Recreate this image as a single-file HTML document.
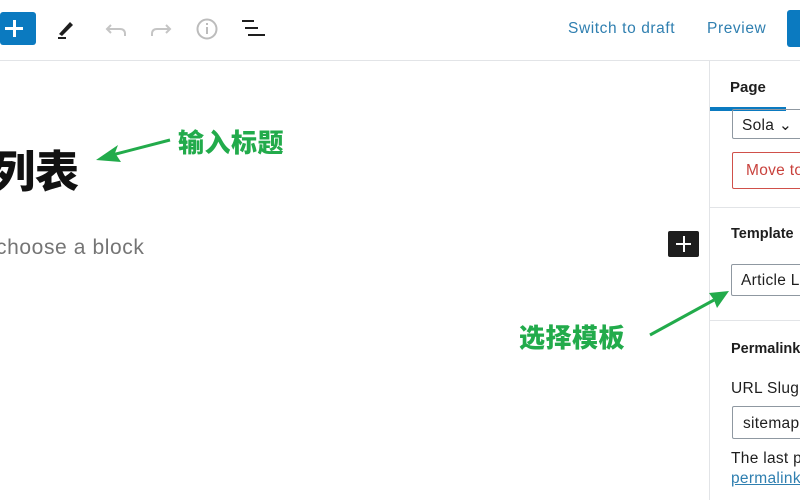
<!DOCTYPE html>
<html><head><meta charset="utf-8"><style>
*{margin:0;padding:0;box-sizing:border-box}
body{width:800px;height:500px;overflow:hidden;background:#fff;font-family:"Liberation Sans","Noto Sans CJK SC",sans-serif;position:relative;color:#1e1e1e}
.a{position:absolute;white-space:nowrap}
.t{font-size:15.5px;color:#1e1e1e;letter-spacing:0.3px}
</style></head><body>
<div class="a" style="left:0;top:0;width:800px;height:61px;border-bottom:1px solid #e2e4e7"></div>
<div class="a" style="left:0;top:12px;width:36px;height:33px;background:#0b7ac0;border-radius:3px"></div>
<div class="a" style="left:5px;top:27px;width:18px;height:3px;background:#fff"></div>
<div class="a" style="left:12.5px;top:20px;width:3px;height:17px;background:#fff"></div>
<svg class="a" style="left:55px;top:16px" width="230" height="26">
<path d="M4 18 L15 6 L18 9 L7 20 Z" fill="#1e1e1e"/><rect x="3" y="21" width="8" height="2" fill="#1e1e1e"/>
<path d="M56 9 L52 13 L56 17 M52 13 H65 Q70 13 70 18 V20" fill="none" stroke="#c5c5c5" stroke-width="2"/>
<path d="M111 9 L115 13 L111 17 M115 13 H102 Q97 13 97 18 V20" fill="none" stroke="#c5c5c5" stroke-width="2"/>
<circle cx="152" cy="13" r="9.5" fill="none" stroke="#bcbcbc" stroke-width="2"/><rect x="151" y="11" width="2" height="7" fill="#bcbcbc"/><rect x="151" y="7" width="2" height="2" fill="#bcbcbc"/>
<rect x="187" y="4" width="12" height="2" fill="#1e1e1e"/><rect x="190" y="11" width="13" height="2" fill="#1e1e1e"/><rect x="193" y="18" width="17" height="2" fill="#1e1e1e"/>
</svg>
<div class="a" style="left:568px;top:20px;font-size:15.5px;letter-spacing:0.6px;color:#2f7fb0">Switch to draft</div>
<div class="a" style="left:707px;top:20px;font-size:15.5px;letter-spacing:0.6px;color:#2f7fb0">Preview</div>
<div class="a" style="left:787px;top:10px;width:20px;height:37px;background:#0b7ac0;border-radius:3px"></div>
<div class="a" style="left:709px;top:61px;width:1px;height:439px;background:#e2e4e7"></div>
<div class="a" style="left:730px;top:79px;font-size:15px;font-weight:bold">Page</div>
<div class="a" style="left:710px;top:107px;width:76px;height:4px;background:#0b7ac0"></div>
<div class="a" style="left:732px;top:109px;width:80px;height:30px;border:1px solid #8f98a1;border-radius:2px"></div>
<div class="a t" style="left:742px;top:116px">Sola ⌄</div>
<div class="a" style="left:732px;top:152px;width:80px;height:37px;border:1px solid #d0504a;border-radius:2px"></div>
<div class="a" style="left:746px;top:162px;font-size:15.5px;letter-spacing:0.3px;color:#c9423d">Move to</div>
<div class="a" style="left:710px;top:207px;width:90px;height:1px;background:#e2e4e7"></div>
<div class="a" style="left:731px;top:226px;font-size:14.5px;font-weight:bold">Template</div>
<div class="a" style="left:731px;top:264px;width:80px;height:32px;border:1px solid #8f98a1;border-radius:2px"></div>
<div class="a t" style="left:741px;top:272px">Article L</div>
<div class="a" style="left:710px;top:320px;width:90px;height:1px;background:#e2e4e7"></div>
<div class="a" style="left:731px;top:341px;font-size:14.5px;font-weight:bold">Permalink</div>
<div class="a t" style="left:731px;top:380px">URL Slug</div>
<div class="a" style="left:732px;top:406px;width:80px;height:33px;border:1px solid #8f98a1;border-radius:2px"></div>
<div class="a t" style="left:743px;top:415px">sitemap</div>
<div class="a t" style="left:731px;top:450px">The last p</div>
<div class="a" style="left:731px;top:470px;font-size:15.5px;letter-spacing:0.3px;color:#2f7fb0;text-decoration:underline">permalink</div>
<div class="a" style="left:-9px;top:140px;font-size:44px;font-weight:900;font-family:'Noto Sans CJK SC',sans-serif;line-height:56px;color:#111">列表</div>
<div class="a" style="left:-4px;top:236px;font-size:21px;letter-spacing:0.6px;color:#757575">choose a block</div>
<div class="a" style="left:668px;top:231px;width:31px;height:26px;background:#1e1e1e;border-radius:2px"></div>
<div class="a" style="left:676px;top:243px;width:15px;height:2px;background:#fff"></div>
<div class="a" style="left:682.5px;top:236px;width:2px;height:16px;background:#fff"></div>
<div class="a" style="left:178px;top:125px;font-size:26px;font-weight:900;color:#22ab4b;font-family:'Noto Sans CJK SC',sans-serif;line-height:34px;letter-spacing:0.5px">输入标题</div>
<div class="a" style="left:519px;top:320px;font-size:26px;font-weight:900;color:#22ab4b;font-family:'Noto Sans CJK SC',sans-serif;line-height:34px;letter-spacing:0.5px">选择模板</div>
<svg class="a" style="left:0;top:0" width="800" height="500">
<path d="M170 140 L112 155" stroke="#22ab4b" stroke-width="3"/><path d="M96 160 L118 145 L115 153 L121 162 Z" fill="#22ab4b"/>
<path d="M650 335 L714 300" stroke="#22ab4b" stroke-width="3"/><path d="M729 291 L709 293 L714 300 L717 308 Z" fill="#22ab4b"/>
</svg>
</body></html>
